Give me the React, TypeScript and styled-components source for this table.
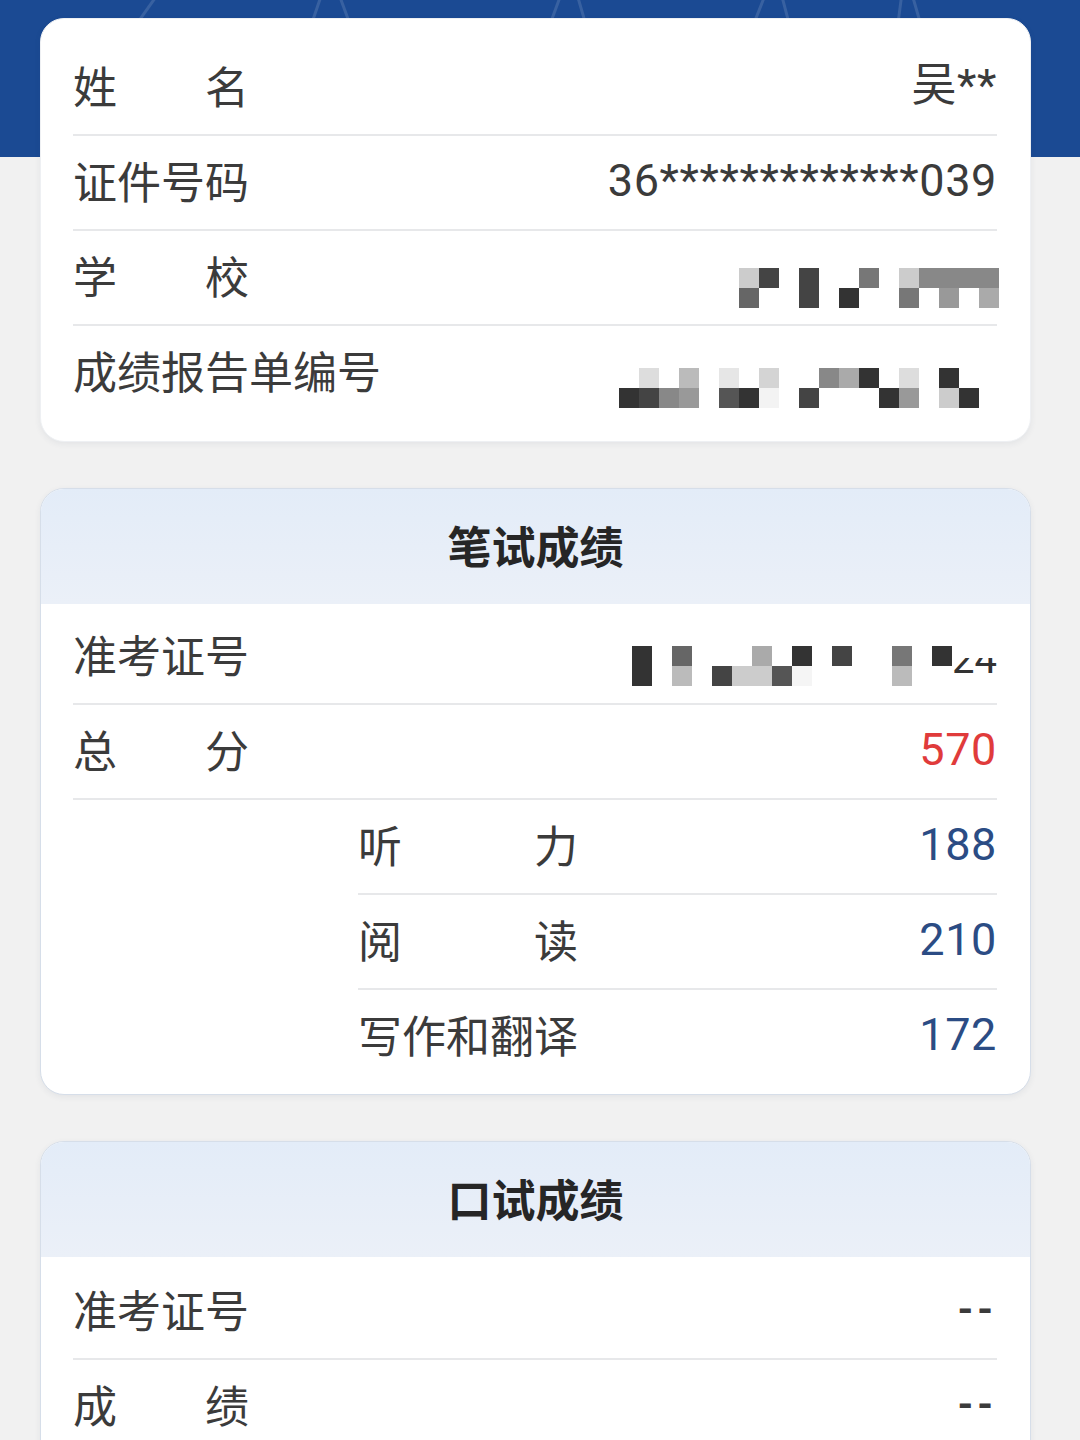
import React from 'react';
import styled, { createGlobalStyle } from 'styled-components';

const Global = createGlobalStyle`
  html, body { margin: 0; padding: 0; background: #f1f1f1; }
  body { font-family: "Noto Sans CJK SC", "Noto Sans", sans-serif; }
  * { box-sizing: border-box; }
`;

const Page = styled.div`
  width: 1080px;
  min-height: 1440px;
  background: #f1f1f1;
  overflow: hidden;
`;

const Banner = styled.div`
  height: 157px;
  background: #1b4a93;
  overflow: hidden;
  svg { display: block; }
`;

const Content = styled.div`
  margin-top: -139px;
  padding-left: 40px;
  width: 1031px;
  display: flex;
  flex-direction: column;
  gap: 46px;
`;

const Card = styled.section<{ $bordered?: boolean }>`
  background: #fff;
  border-radius: 24px;
  overflow: hidden;
  border: 1px solid ${p => (p.$bordered ? '#d6dee9' : '#eef0f3')};
  box-shadow: 0 2px 6px rgba(40, 60, 90, 0.07);
`;

const CardTitle = styled.h2`
  margin: 0;
  height: 115px;
  padding-bottom: 4px;
  display: flex;
  align-items: center;
  justify-content: center;
  background: linear-gradient(180deg, #e3ecf8 0%, #ebf0f8 100%);
  font-size: 44px;
  font-weight: 700;
  color: #262626;
`;

const CardBody = styled.div<{ $top: number; $bottom: number }>`
  padding: ${p => p.$top}px 33px ${p => p.$bottom}px 32px;
`;

const Row = styled.div<{ $indent?: number }>`
  display: flex;
  align-items: center;
  height: 93px;
  padding-bottom: 4px;
  margin-left: ${p => p.$indent || 0}px;
  border-bottom: 2px solid #e7e8ea;
  &:last-child { border-bottom: none; height: 93px; }
  &:not(:last-child) { height: 95px; }
`;

const Label = styled.span<{ $w?: number }>`
  display: block;
  width: ${p => (p.$w ? `${p.$w}px` : 'auto')};
  text-align: ${p => (p.$w ? 'justify' : 'left')};
  text-align-last: ${p => (p.$w ? 'justify' : 'auto')};
  font-size: 44px;
  line-height: 1.2;
  color: #3b3b3b;
  white-space: nowrap;
`;

const Value = styled.span<{ $color?: string }>`
  margin-left: auto;
  font-family: Roboto, "Noto Sans CJK SC", sans-serif;
  font-size: 45px;
  line-height: 1.2;
  letter-spacing: 0.6px;
  color: ${p => p.$color || '#3b3b3b'};
  white-space: nowrap;
`;

const Dash = styled(Value)`
  letter-spacing: 4px;
  font-weight: 700;
  font-size: 40px;
`;

const Mosaic = styled.div<{ $cols: number; $right: number; $bottom: number }>`
  margin-left: auto;
  align-self: flex-end;
  margin-right: ${p => p.$right}px;
  margin-bottom: ${p => p.$bottom}px;
  display: grid;
  grid-template-columns: repeat(${p => p.$cols}, 20px);
  grid-auto-rows: 20px;
`;

const Cell = styled.span<{ $c: string }>`
  background: ${p => p.$c || 'transparent'};
`;

const Tail = styled.span`
  align-self: flex-end;
  margin-bottom: 23px;
  height: 18px;
  overflow: hidden;
  display: block;
`;

const TailText = styled.span`
  display: block;
  margin-top: -18px;
  font-family: Roboto, sans-serif;
  font-size: 40px;
  line-height: 40px;
  color: #333;
`;

const MosaicBlock: React.FC<{ rows: string[][]; right: number; bottom: number }> = ({ rows, right, bottom }) => (
  <Mosaic $cols={rows[0].length} $right={right} $bottom={bottom}>
    {rows.flatMap((r, i) => r.map((c, j) => <Cell key={`${i}-${j}`} $c={c ? `#${c}` : ''} />))}
  </Mosaic>
);

const school = [
  ['ccc', '444', '', '444', '', '', '777', '', 'ccc', '888', '888', '888', '888'],
  ['666', '', '', '444', '', '333', '', '', '777', '', '999', '', 'aaa'],
];

const report = [
  ['', 'ddd', '', 'bbb', '', 'e6e6e6', '', 'd4d4d4', '', '', '888', 'aaa', '333', '', 'ddd', '', '333', ''],
  ['333', '444', '888', '999', '', '555', '333', 'f3f3f3', '', '444', '', '', '', '333', '999', '', 'ccc', '333'],
];

const admission = [
  ['333', '', '666', '', '', '', 'aaa', '', '333', '', '444', '', '', '777', '', '333'],
  ['333', '', 'bbb', '', '444', 'ccc', 'ccc', '555', 'f5f5f5', '', '', '', '', 'bbb', '', ''],
];

const BannerArt = () => (
  <svg width="1080" height="157" viewBox="0 0 1080 157">
    <g fill="none" stroke="rgba(255,255,255,0.13)" strokeWidth="3">
      <path d="M40 160 L175 -30" />
      <path d="M265 160 L330 -30 L400 160" />
      <path d="M500 160 L570 -30 L625 160" />
      <path d="M700 160 L775 -30 L825 160" />
      <path d="M880 160 L905 -30 L960 160" />
    </g>
  </svg>
);

export default function App() {
  return (
    <Page>
      <Global />
      <Banner>
        <BannerArt />
      </Banner>
      <Content>
        <Card>
          <CardBody $top={22} $bottom={22}>
            <Row>
              <Label $w={176}>姓名</Label>
              <Value>吴**</Value>
            </Row>
            <Row>
              <Label>证件号码</Label>
              <Value>36*************039</Value>
            </Row>
            <Row>
              <Label $w={176}>学校</Label>
              <MosaicBlock rows={school} right={-2} bottom={12} />
            </Row>
            <Row>
              <Label>成绩报告单编号</Label>
              <MosaicBlock rows={report} right={18} bottom={7} />
            </Row>
          </CardBody>
        </Card>

        <Card $bordered>
          <CardTitle>笔试成绩</CardTitle>
          <CardBody $top={6} $bottom={11}>
            <Row>
              <Label>准考证号</Label>
              <MosaicBlock rows={admission} right={0} bottom={13} />
              <Tail>
                <TailText>24</TailText>
              </Tail>
            </Row>
            <Row>
              <Label $w={176}>总分</Label>
              <Value $color="#e03b3b">570</Value>
            </Row>
            <Row $indent={285}>
              <Label $w={220}>听力</Label>
              <Value $color="#2b4c84">188</Value>
            </Row>
            <Row $indent={285}>
              <Label $w={220}>阅读</Label>
              <Value $color="#2b4c84">210</Value>
            </Row>
            <Row $indent={285}>
              <Label $w={220}>写作和翻译</Label>
              <Value $color="#2b4c84">172</Value>
            </Row>
          </CardBody>
        </Card>

        <Card $bordered>
          <CardTitle>口试成绩</CardTitle>
          <CardBody $top={8} $bottom={10}>
            <Row>
              <Label>准考证号</Label>
              <Dash>--</Dash>
            </Row>
            <Row>
              <Label $w={176}>成绩</Label>
              <Dash>--</Dash>
            </Row>
          </CardBody>
        </Card>
      </Content>
    </Page>
  );
}
